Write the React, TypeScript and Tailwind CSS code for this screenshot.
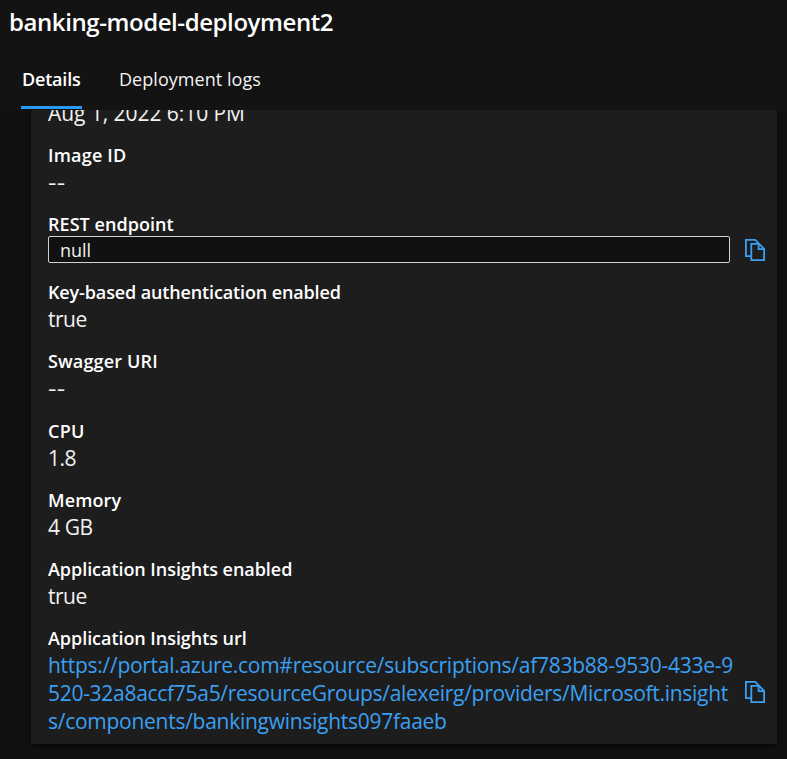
import type { ReactNode } from "react";

const VALUE = "text-[21px] leading-7 text-[#f3f2f1]";

function Label({ children, className = "" }: { children: ReactNode; className?: string }) {
  return (
    <div className={`h-6 whitespace-nowrap text-[18px] font-semibold leading-6 text-white ${className}`}>{children}</div>
  );
}

function Field({ label, value, labelClass = "", valueClass = "", height = "h-[69px]" }: { label: string; value: string; labelClass?: string; valueClass?: string; height?: string }) {
  return (
    <div className={height}>
      <Label className={labelClass}>{label}</Label>
      <div className={`${VALUE} pt-px ${valueClass}`}>{value}</div>
    </div>
  );
}

function CopyIcon() {
  return (
    <svg className="block h-6 w-[22px] shrink-0" viewBox="0 0 22 24" fill="none" stroke="#3aa0f3" strokeWidth="1.8">
      <path d="M7 18.1H1.9V1.9h9.3l4 4" />
      <path d="M7.3 5.9h7.8l5 5v11.2H7.3z" />
      <path d="M14.6 6v5.2h5.5" />
    </svg>
  );
}

export default function App() {
  return (
    <div className="flex h-[759px] w-full flex-col overflow-hidden bg-[#111111] font-['Open_Sans','Noto_Sans',sans-serif]">
      <header className="h-[110px] shrink-0 bg-[#131313]">
        <h1 className="h-[54px] pl-[9px] pt-[6px] text-[24px] font-semibold leading-8 tracking-[-0.42px] text-white">
          banking-model-deployment2
        </h1>
        <nav className="flex h-[55px] gap-[37px] pl-[21px] text-[18px] leading-[50px]">
          <div className="w-[61px] border-b-[3px] border-[#2899f5] pl-px font-semibold tracking-[-0.2px] text-white">Details</div>
          <div className="tracking-[0.05px] text-[#f3f2f1]">Deployment logs</div>
        </nav>
      </header>
      <main className="ml-[31px] h-[634px] w-[746px] shrink-0 bg-[#1d1d1d] pl-[17px] shadow-[0_2px_6px_rgba(0,0,0,0.7)] [clip-path:inset(0_-10px_-15px_-10px)]">
        <div className="h-[33px] overflow-hidden">
          <div className={`${VALUE} -mt-[11px] tracking-[-0.05px]`}>Aug 1, 2022 6:10 PM</div>
        </div>
        <Field label="Image ID" value="--" labelClass="tracking-[0.2px]" valueClass="origin-left scale-x-125 tracking-[0.3px]" />
        <div className="h-[68px]">
          <Label className="tracking-[0.05px]">REST endpoint</Label>
          <div className="flex items-center gap-[14px]">
            <div className="h-[27px] w-[682px] rounded-[2px] border border-[#d2d0ce] bg-[#111111] pl-[11px] text-[18px] leading-[26px] text-[#f3f2f1]">
              null
            </div>
            <CopyIcon />
          </div>
        </div>
        <Field label="Key-based authentication enabled" value="true" labelClass="tracking-[-0.13px]" valueClass="tracking-[-0.5px]" />
        <Field label="Swagger URI" value="--" height="h-[70px]" labelClass="tracking-[0.15px]" valueClass="origin-left scale-x-125 tracking-[0.3px]" />
        <Field label="CPU" value="1.8" labelClass="tracking-[0.3px]" valueClass="tracking-[-0.5px]" />
        <Field label="Memory" value="4 GB" labelClass="tracking-[0.1px]" valueClass="tracking-[-0.4px]" />
        <Field label="Application Insights enabled" value="true" labelClass="tracking-[-0.05px]" valueClass="tracking-[-0.5px]" />
        <div>
          <Label className="tracking-[-0.05px]">Application Insights url</Label>
          <div className="flex items-center gap-[14px] pt-px">
            <a className="w-[682px] whitespace-nowrap text-[21px] leading-7 text-[#3aa0f3]">
              <span className="block tracking-[-0.28px]">https://portal.azure.com#resource/subscriptions/af783b88-9530-433e-9</span>
              <span className="block tracking-[-0.29px]">520-32a8accf75a5/resourceGroups/alexeirg/providers/Microsoft.insight</span>
              <span className="block tracking-[-0.27px]">s/components/bankingwinsights097faaeb</span>
            </a>
            <div className="-mt-[2px]">
              <CopyIcon />
            </div>
          </div>
        </div>
      </main>
    </div>
  );
}
